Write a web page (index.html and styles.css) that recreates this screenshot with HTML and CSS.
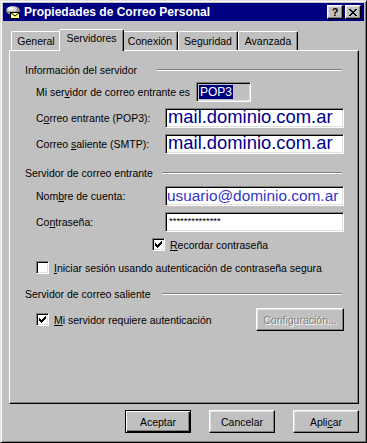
FILE: index.html
```html
<!DOCTYPE html>
<html lang="es">
<head>
<meta charset="utf-8">
<title>Propiedades de Correo Personal</title>
<link rel="stylesheet" href="styles.css">
</head>
<body>
<div class="window">
  <div class="titlebar">
    <svg class="app-icon" width="16" height="16" viewBox="0 0 16 16">
      <ellipse cx="8" cy="6.5" rx="7" ry="4.5" fill="#909090"/>
      <ellipse cx="7" cy="5" rx="5" ry="2.6" fill="#d8d8d8"/>
      <ellipse cx="6" cy="4.5" rx="2.5" ry="1.2" fill="#ffffff"/>
      <rect x="5.5" y="8.5" width="9" height="6" fill="#ffff99" stroke="#000"/>
      <path d="M5.5 8.5l4.5 3.5 4.5-3.5" fill="none" stroke="#000"/>
    </svg>
    <span class="title">Propiedades de Correo Personal</span>
    <div class="caption-btns">
      <div class="cap-btn help">?</div>
      <div class="cap-btn">
        <svg width="8" height="7" viewBox="0 0 8 7" shape-rendering="crispEdges"><path fill="#000" d="M0 0h2v1h-2z M6 0h2v1h-2z M1 1h2v1h-2z M5 1h2v1h-2z M2 2h4v1h-4z M3 3h2v1h-2z M2 4h4v1h-4z M1 5h2v1h-2z M5 5h2v1h-2z M0 6h2v1h-2z M6 6h2v1h-2z"/></svg>
      </div>
    </div>
  </div>

  <div class="tabs">
    <div class="tab t-general">General</div>
    <div class="tab t-serv active">Servidores</div>
    <div class="tab t-con">Conexión</div>
    <div class="tab t-seg">Seguridad</div>
    <div class="tab t-ava">Avanzada</div>
  </div>

  <div class="panel">
    <div class="group-head">
      <span class="gh-label gh-a">Información del servidor</span>
      <span class="etch"></span>
    </div>
    <div class="row r-tight">
      <span class="lbl lbl-pop">Mi ser<u>v</u>idor de correo entrante es</span>
      <div class="field field-ro"><span class="sel">POP3</span></div>
    </div>
    <div class="row">
      <span class="lbl">C<u>o</u>rreo entrante (POP3):</span>
      <div class="field field-wide field-open"><span class="f-big">mail.dominio.com.ar</span></div>
    </div>
    <div class="row">
      <span class="lbl">Correo <u>s</u>aliente (SMTP):</span>
      <div class="field field-wide field-open"><span class="f-big">mail.dominio.com.ar</span></div>
    </div>

    <div class="group-head gh-space">
      <span class="gh-label gh-b">Servidor de correo entrante</span>
      <span class="etch"></span>
    </div>
    <div class="row">
      <span class="lbl">Nom<u>b</u>re de cuenta:</span>
      <div class="field field-wide"><span class="f-user">usuario@dominio.com.ar</span></div>
    </div>
    <div class="row">
      <span class="lbl">Co<u>n</u>traseña:</span>
      <div class="field field-wide"><span class="f-pass">**************</span></div>
    </div>
    <div class="check-row cr-remember">
      <span class="checkbox">
        <svg width="7" height="7" viewBox="0 0 7 7" shape-rendering="crispEdges"><path fill="#000" d="M6 0h1v1h-1z M5 1h2v1h-2z M0 2h1v1h-1z M4 2h3v1h-3z M0 3h2v1h-2z M3 3h3v1h-3z M0 4h5v1h-5z M1 5h3v1h-3z M2 6h1v1h-1z"/></svg>
      </span>
      <span class="check-lbl"><u>R</u>ecordar contraseña</span>
    </div>
    <div class="check-row cr-spa">
      <span class="checkbox"></span>
      <span class="check-lbl"><u>I</u>niciar sesión usando autenticación de contraseña segura</span>
    </div>

    <div class="group-head gh-space2">
      <span class="gh-label gh-b">Servidor de correo saliente</span>
      <span class="etch"></span>
    </div>
    <div class="row r-auth">
      <div class="check-row">
        <span class="checkbox">
          <svg width="7" height="7" viewBox="0 0 7 7" shape-rendering="crispEdges"><path fill="#000" d="M6 0h1v1h-1z M5 1h2v1h-2z M0 2h1v1h-1z M4 2h3v1h-3z M0 3h2v1h-2z M3 3h3v1h-3z M0 4h5v1h-5z M1 5h3v1h-3z M2 6h1v1h-1z"/></svg>
        </span>
        <span class="check-lbl"><u>M</u>i servidor requiere autenticación</span>
      </div>
      <div class="btn btn-config disabled">Confi<u>g</u>uración...</div>
    </div>
  </div>

  <div class="buttons">
    <div class="btn btn-default">Aceptar</div>
    <div class="btn">Cancelar</div>
    <div class="btn">Apli<u>c</u>ar</div>
  </div>
</div>
</body>
</html>
```

FILE: styles.css
```css
html, body {
  margin: 0;
  padding: 0;
  background: #c0c0c0;
}

body {
  font-family: "Liberation Sans", Arial, sans-serif;
  font-size: 10.5px;
  color: #000;
}

u {
  text-decoration: underline;
  text-underline-offset: 1px;
}

.window {
  width: 367px;
  height: 443px;
  box-sizing: border-box;
  border: 1px solid;
  border-color: #dfdfdf #000 #000 #dfdfdf;
  box-shadow: inset 1px 1px #fff, inset -1px -1px #808080;
  padding: 2px;
  background: #c0c0c0;
  display: flex;
  flex-direction: column;
}

/* Title bar */
.titlebar {
  height: 18px;
  background: #000080;
  display: flex;
  align-items: center;
  padding: 0 3px 0 2px;
  flex: none;
}

.app-icon {
  display: block;
  flex: none;
}

.title {
  margin-left: 3px;
  color: #fff;
  font-weight: bold;
  font-size: 12px;
  white-space: nowrap;
}

.caption-btns {
  margin-left: auto;
  display: flex;
  gap: 2px;
}

.cap-btn {
  width: 16px;
  height: 14px;
  box-sizing: border-box;
  background: #c0c0c0;
  border: 1px solid;
  border-color: #fff #000 #000 #fff;
  box-shadow: inset -1px -1px #808080, inset 1px 1px #dfdfdf;
  display: flex;
  align-items: center;
  justify-content: center;
}

.cap-btn.help {
  font-weight: bold;
  font-size: 11px;
  line-height: 11px;
}

/* Tabs */
.tabs {
  margin-top: 8px;
  height: 21px;
  display: flex;
  align-items: flex-end;
  padding-left: 8px;
  flex: none;
}

.tab {
  box-sizing: border-box;
  height: 19px;
  border-top: 1px solid #fff;
  border-left: 1px solid #fff;
  border-right: 1px solid #000;
  box-shadow: inset -1px 0 #808080;
  border-radius: 2px 2px 0 0;
  text-align: center;
  padding-top: 2px;
  line-height: 14px;
  background: #c0c0c0;
  white-space: nowrap;
}

.t-general { width: 50px; }
.t-serv { width: 65px; }
.t-con { width: 56px; }
.t-seg { width: 60px; }
.t-ava { width: 60px; }

.tab.active {
  height: 22px;
  margin: 0 -2px -1px;
  position: relative;
  z-index: 1;
  padding-top: 1px;
}

/* Panel */
.panel {
  margin-left: 6px;
  width: 350px;
  height: 354px;
  box-sizing: border-box;
  border-top: 1px solid #fff;
  border-left: 1px solid #fff;
  border-right: 1px solid #000;
  border-bottom: 1px solid #000;
  box-shadow: inset -1px -1px #808080;
  padding: 12px 14px 0 15px;
  flex: none;
}

.group-head {
  display: flex;
  align-items: center;
  height: 14px;
  line-height: 14px;
}

.gh-space { margin-top: 12px; }
.gh-space2 { margin-top: 13px; }

.gh-label { flex: none; white-space: nowrap; }
.gh-a { width: 132px; }
.gh-b { width: 137px; }

.etch {
  flex: 1;
  height: 0;
  border-top: 1px solid #808080;
  border-bottom: 1px solid #fff;
  margin-right: 2px;
}

.row {
  display: flex;
  align-items: center;
  height: 20px;
  margin-top: 6px;
  padding-left: 11px;
}

.row.r-tight { margin-top: 5px; }

.lbl { white-space: nowrap; }
.lbl-pop { width: 160px; flex: none; }

.field {
  box-sizing: border-box;
  height: 20px;
  border: 1px solid;
  border-color: #808080 #fff #fff #808080;
  box-shadow: inset 1px 1px #000, inset -1px -1px #dfdfdf;
  background: #fff;
  overflow: hidden;
  padding: 1px 1px 1px 2px;
  white-space: nowrap;
}

.field.field-open {
  overflow: visible;
}

.field-wide {
  width: 179px;
  margin-left: auto;
}

.field-ro {
  width: 55px;
  background: #c0c0c0;
  display: flex;
  align-items: center;
  padding-left: 2px;
}

.sel {
  background: #000080;
  color: #fff;
  font-size: 12px;
  line-height: 14px;
  padding: 0 1px;
}

.f-big {
  display: block;
  font-size: 18.4px;
  line-height: 13px;
  color: #00008c;
  padding-left: 0;
}

.f-user {
  display: block;
  font-size: 15.4px;
  line-height: 15px;
  color: #3434c4;
  margin-left: -1px;
}

.f-pass {
  display: block;
  font-size: 9.5px;
  line-height: 13px;
  color: #000;
  padding-left: 1px;
}

/* Checkboxes */
.check-row {
  display: flex;
  align-items: center;
  height: 13px;
  gap: 5px;
}

.cr-remember {
  margin-top: 6px;
  padding-left: 127px;
}

.cr-spa {
  margin-top: 10px;
  padding-left: 11px;
}

.checkbox {
  box-sizing: border-box;
  width: 13px;
  height: 13px;
  flex: none;
  border: 1px solid;
  border-color: #808080 #fff #fff #808080;
  box-shadow: inset 1px 1px #000, inset -1px -1px #dfdfdf;
  background: #fff;
  display: flex;
  align-items: center;
  justify-content: center;
}

.check-lbl { white-space: nowrap; }

.r-auth {
  height: 23px;
  margin-top: 7px;
}

/* Buttons */
.btn {
  box-sizing: border-box;
  width: 66px;
  height: 23px;
  background: #c0c0c0;
  border: 1px solid;
  border-color: #fff #000 #000 #fff;
  box-shadow: inset -1px -1px #808080, inset 1px 1px #dfdfdf;
  display: flex;
  align-items: center;
  justify-content: center;
  white-space: nowrap;
}

.btn-default {
  border-color: #000;
  box-shadow: inset 1px 1px #fff, inset -1px -1px #000, inset -2px -2px #808080;
}

.btn-config {
  width: 88px;
  margin-left: auto;
}

.btn.disabled {
  color: #808080;
  text-shadow: 1px 1px 0 #fff;
}

.buttons {
  margin-top: 6px;
  display: flex;
  justify-content: flex-end;
  gap: 18px;
  padding-right: 5px;
  flex: none;
}
```
